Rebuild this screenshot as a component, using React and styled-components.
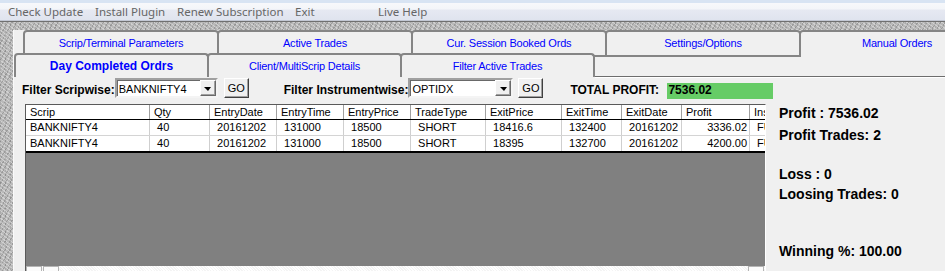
import React from "react";
import styled, { createGlobalStyle } from "styled-components";

const GlobalStyle = createGlobalStyle`
  html, body {
    margin: 0;
    padding: 0;
  }
  body {
    width: 945px;
    height: 271px;
    overflow: hidden;
    background: #f0f0f0;
    font-family: "Liberation Sans", Arial, sans-serif;
  }
`;

const menuItems = [
  { label: "Check Update", width: 87 },
  { label: "Install Plugin", width: 82 },
  { label: "Renew Subscription", width: 118 },
  { label: "Exit", width: 83 },
  { label: "Live Help" },
];

const backTabs = [
  "Scrip/Terminal Parameters",
  "Active Trades",
  "Cur. Session Booked Ords",
  "Settings/Options",
  "Manual Orders",
];

const frontTabs = [
  { label: "Day Completed Ordrs", active: true },
  { label: "Client/MultiScrip Details" },
  { label: "Filter Active Trades" },
];

// last column is cut by the grid edge, as in the app
const columns = [
  { key: "scrip", title: "Scrip", width: "124px" },
  { key: "qty", title: "Qty", width: "60px" },
  { key: "entryDate", title: "EntryDate", width: "67px" },
  { key: "entryTime", title: "EntryTime", width: "67px" },
  { key: "entryPrice", title: "EntryPrice", width: "67px" },
  { key: "tradeType", title: "TradeType", width: "75px" },
  { key: "exitPrice", title: "ExitPrice", width: "76px" },
  { key: "exitTime", title: "ExitTime", width: "60px" },
  { key: "exitDate", title: "ExitDate", width: "60px" },
  { key: "profit", title: "Profit", width: "68px", align: "right" },
  { key: "ins", title: "Ins", width: "minmax(0, 1fr)" },
];

// leading spaces are part of the cell text, like the original grid
const trades = [
  {
    scrip: "BANKNIFTY4",
    qty: " 40",
    entryDate: " 20161202",
    entryTime: " 131000",
    entryPrice: " 18500",
    tradeType: " SHORT",
    exitPrice: " 18416.6",
    exitTime: " 132400",
    exitDate: " 20161202",
    profit: "3336.02",
    ins: " FU",
  },
  {
    scrip: "BANKNIFTY4",
    qty: " 40",
    entryDate: " 20161202",
    entryTime: " 131000",
    entryPrice: " 18500",
    tradeType: " SHORT",
    exitPrice: " 18395",
    exitTime: " 132700",
    exitDate: " 20161202",
    profit: "4200.00",
    ins: " FU",
  },
];

const stats = [
  { text: "Profit : 7536.02", gap: 0 },
  { text: "Profit Trades: 2", gap: 6 },
  { text: "Loss : 0", gap: 23 },
  { text: "Loosing Trades: 0", gap: 4 },
  { text: "Winning %: 100.00", gap: 41 },
];

const gridTemplate = columns.map((c) => c.width).join(" ");

export default function App() {
  return (
    <>
      <GlobalStyle />
      <Window>
        <MenuBar>
          {menuItems.map((item) => (
            <MenuItem key={item.label} $w={item.width}>
              {item.label}
            </MenuItem>
          ))}
        </MenuBar>
        <Frame>
          <Inner>
            <BackRow>
              {backTabs.map((label, i) => (
                <BackTab key={label} $open={i === backTabs.length - 1}>
                  {label}
                </BackTab>
              ))}
            </BackRow>
            <FrontRow>
              {frontTabs.map((tab) => (
                <FrontTab key={tab.label} $active={tab.active}>
                  {tab.label}
                </FrontTab>
              ))}
              <TabFiller />
            </FrontRow>
            <Panel>
              <FilterBar>
                <Label $w={92}>Filter Scripwise:</Label>
                <Combo $w={103}>
                  <ComboText>BANKNIFTY4</ComboText>
                  <DropButton>
                    <Arrow />
                  </DropButton>
                </Combo>
                <GoButton $ml={6}>GO</GoButton>
                <Label $w={121} $ml={35}>
                  Filter Instrumentwise:
                </Label>
                <Combo $w={105}>
                  <ComboText>OPTIDX</ComboText>
                  <DropButton>
                    <Arrow />
                  </DropButton>
                </Combo>
                <GoButton $ml={5}>GO</GoButton>
                <Label $w={97} $ml={27}>
                  TOTAL PROFIT:
                </Label>
                <TotalBox>7536.02</TotalBox>
              </FilterBar>
              <Body>
                <Grid>
                  <GridRow $head>
                    {columns.map((c) => (
                      <Cell key={c.key} $head>
                        {c.title}
                      </Cell>
                    ))}
                  </GridRow>
                  {trades.map((t, i) => (
                    <GridRow key={i} $last={i === trades.length - 1}>
                      {columns.map((c) => (
                        <Cell key={c.key} $align={c.align}>
                          {t[c.key]}
                        </Cell>
                      ))}
                    </GridRow>
                  ))}
                  <EmptyArea />
                  <ScrollStrip>
                    <ScrollButton />
                    <ScrollButton />
                    <ScrollTrack />
                    <ScrollButton />
                  </ScrollStrip>
                </Grid>
                <Stats>
                  {stats.map((s) => (
                    <StatLine key={s.text} $gap={s.gap}>
                      {s.text}
                    </StatLine>
                  ))}
                </Stats>
              </Body>
            </Panel>
          </Inner>
        </Frame>
      </Window>
    </>
  );
}

const Window = styled.div`
  width: 945px;
  height: 271px;
  overflow: hidden;
  display: flex;
  flex-direction: column;
`;

const MenuBar = styled.div`
  height: 21px;
  flex-shrink: 0;
  display: flex;
  align-items: flex-start;
  box-sizing: border-box;
  padding: 3px 0 0 8px;
  background: linear-gradient(
    to bottom,
    #d8e4f3 0px,
    #d8e4f3 3px,
    #f7f8fb 3px,
    #f3f5f9 9px,
    #e6e9f2 10px,
    #dfe3ee 21px
  );
  border-bottom: 1px solid #c3c8d4;
  font-family: "Noto Sans", "Open Sans", sans-serif;
  font-size: 11.5px;
  line-height: 18px;
  color: #666666;
`;

const MenuItem = styled.span`
  flex: 0 0 ${(p) => (p.$w ? `${p.$w}px` : "auto")};
  white-space: nowrap;
`;

const Frame = styled.div`
  flex: 1;
  min-height: 0;
  display: flex;
  border-top: 1px solid #707070;
  padding: 8px 0 0 13px;
  background-color: #b9b9b9;
  background-image: repeating-linear-gradient(
      37deg,
      rgba(255, 255, 255, 0.35) 0 1px,
      transparent 1px 3px
    ),
    repeating-linear-gradient(
      -61deg,
      rgba(0, 0, 0, 0.16) 0 1px,
      transparent 1px 4px
    ),
    repeating-linear-gradient(
      90deg,
      rgba(0, 0, 0, 0.08) 0 1px,
      transparent 1px 5px
    );
`;

const Inner = styled.div`
  flex: 1;
  min-width: 0;
  display: flex;
  flex-direction: column;
  background: #f0f0f0;
  border-left: 1px solid #fafafa;
  overflow: hidden;
`;

const BackRow = styled.div`
  display: flex;
  flex-shrink: 0;
  height: 27px;
  padding-left: 9px;
`;

const BackTab = styled.div`
  flex: 0 0 196px;
  margin-left: -2px;
  box-sizing: border-box;
  height: 27px;
  border: 2px solid #858585;
  border-bottom: ${(p) => (p.$open ? "none" : "2px solid #858585")};
  border-radius: 4px 4px 0 0;
  background: #f0f0f0;
  padding-top: 4px;
  text-align: center;
  font-size: 11px;
  line-height: 14px;
  letter-spacing: -0.2px;
  color: #0000ff;
  white-space: nowrap;

  &:first-child {
    margin-left: 0;
  }
`;

const FrontRow = styled.div`
  position: relative;
  z-index: 1;
  display: flex;
  flex-shrink: 0;
  height: 24px;
  margin-top: -4px;
`;

const FrontTab = styled.div`
  flex: 0 0 195px;
  margin-left: -2px;
  box-sizing: border-box;
  height: 24px;
  border: 2px solid #858585;
  border-bottom: none;
  border-radius: 4px 4px 0 0;
  background: #f0f0f0;
  padding-top: 4px;
  text-align: center;
  line-height: 14px;
  color: #0000ff;
  white-space: nowrap;
  font-size: ${(p) => (p.$active ? "12px" : "11px")};
  font-weight: ${(p) => (p.$active ? "bold" : "normal")};
  letter-spacing: ${(p) => (p.$active ? "0" : "-0.2px")};

  &:first-child {
    margin-left: 0;
  }
`;

const TabFiller = styled.div`
  flex: 1;
  border-bottom: 1px solid #6d6d6d;
  box-shadow: 0 1px 0 #ffffff;
`;

const Panel = styled.div`
  flex: 1;
  min-height: 0;
  display: flex;
  flex-direction: column;
  padding-top: 1px;
`;

const FilterBar = styled.div`
  display: flex;
  align-items: flex-start;
  flex-shrink: 0;
  height: 20px;
  padding-left: 8px;
`;

const Label = styled.span`
  flex: 0 0 ${(p) => p.$w}px;
  margin-left: ${(p) => p.$ml || 0}px;
  padding-top: 5px;
  font-size: 12px;
  font-weight: bold;
  line-height: 14px;
  color: #000;
  white-space: nowrap;
`;

const Combo = styled.div`
  flex: 0 0 ${(p) => p.$w}px;
  height: 20px;
  box-sizing: border-box;
  display: flex;
  background: #fff;
  border: 2px solid;
  border-color: #a0a0a0 #f4f4f4 #f4f4f4 #a0a0a0;
  box-shadow: inset 1px 1px 0 #696969;
`;

const ComboText = styled.span`
  flex: 1;
  padding: 1px 0 0 2px;
  font-size: 11px;
  line-height: 16px;
  color: #000;
`;

const DropButton = styled.span`
  width: 16px;
  height: 16px;
  box-sizing: border-box;
  display: flex;
  align-items: center;
  justify-content: center;
  background: #f0f0f0;
  border: 1px solid;
  border-color: #ffffff #696969 #696969 #ffffff;
  box-shadow: inset -1px -1px 0 #a0a0a0;
`;

const Arrow = styled.span`
  width: 0;
  height: 0;
  margin-top: 1px;
  border-left: 4px solid transparent;
  border-right: 3px solid transparent;
  border-top: 4px solid #000;
`;

const GoButton = styled.button`
  flex: 0 0 25px;
  height: 20px;
  margin-left: ${(p) => p.$ml}px;
  padding: 0;
  box-sizing: border-box;
  display: flex;
  align-items: center;
  justify-content: center;
  background: #f0f0f0;
  border: 1px solid;
  border-color: #ffffff #404040 #404040 #ffffff;
  box-shadow: inset -1px -1px 0 #a0a0a0;
  font-family: "Liberation Sans", Arial, sans-serif;
  font-size: 11px;
  color: #000;
`;

const TotalBox = styled.div`
  flex: 0 0 106px;
  height: 16px;
  margin-top: 5px;
  padding-left: 1px;
  box-sizing: border-box;
  background: #66cc66;
  font-size: 12px;
  font-weight: bold;
  line-height: 14px;
  color: #000;
`;

const Body = styled.div`
  flex: 1;
  min-height: 0;
  display: flex;
  margin-top: 6px;
  padding-left: 11px;
`;

const Grid = styled.div`
  flex: 0 0 741px;
  box-sizing: border-box;
  display: flex;
  flex-direction: column;
  border-top: 1px solid #5a5a5a;
  border-left: 1px solid #5a5a5a;
  border-right: 1px solid #ffffff;
  overflow: hidden;
`;

const GridRow = styled.div`
  display: grid;
  grid-template-columns: ${gridTemplate};
  flex-shrink: 0;
  background: #fff;
  border-bottom: ${(p) =>
    p.$head
      ? "1px solid #000"
      : p.$last
      ? "2px solid #000"
      : "1px solid #d4d4d4"};
`;

const Cell = styled.div`
  box-sizing: border-box;
  height: ${(p) => (p.$head ? 14 : 15)}px;
  padding: ${(p) => (p.$align === "right" ? "0 2px 0 0" : "0 0 0 4px")};
  border-right: 1px solid ${(p) => (p.$head ? "#a0a0a0" : "#cfcfcf")};
  text-align: ${(p) => p.$align || "left"};
  font-size: 11px;
  line-height: ${(p) => (p.$head ? 14 : 15)}px;
  color: #000;
  white-space: pre;
  overflow: hidden;

  &:last-child {
    border-right: none;
  }
`;

const EmptyArea = styled.div`
  flex: 0 0 113px;
  background: #808080;
`;

const ScrollStrip = styled.div`
  flex: 0 0 17px;
  display: flex;
  background-color: #f4f4f4;
  background-image: repeating-linear-gradient(
    45deg,
    #ffffff 0 1px,
    transparent 1px 2px
  );
`;

const ScrollButton = styled.span`
  flex: 0 0 16px;
  box-sizing: border-box;
  margin-right: 1px;
  background: #fbfbfb;
  border: 1px solid #b4b4b4;
`;

const ScrollTrack = styled.span`
  flex: 1;
`;

const Stats = styled.div`
  display: flex;
  flex-direction: column;
  margin-left: 13px;
  padding-top: 1px;
`;

const StatLine = styled.div`
  margin-top: ${(p) => p.$gap}px;
  font-size: 14px;
  font-weight: bold;
  line-height: 16px;
  color: #000;
  white-space: nowrap;
`;
